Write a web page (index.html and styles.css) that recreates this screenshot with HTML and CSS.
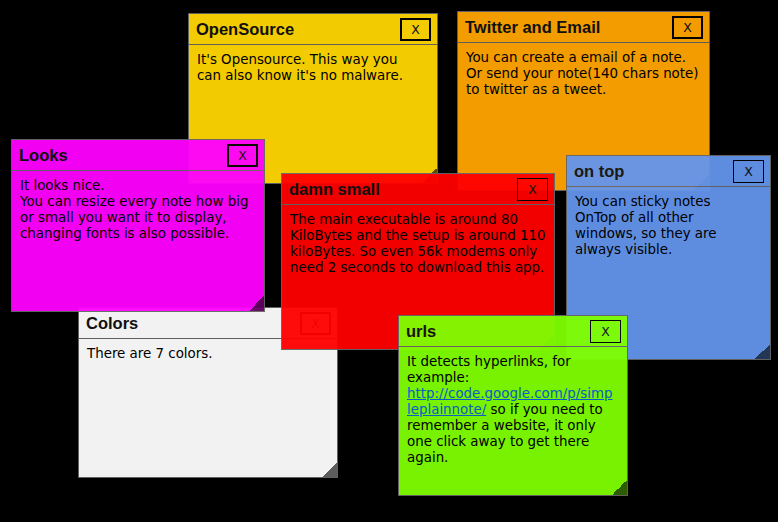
FILE: index.html
```html
<!DOCTYPE html>
<html lang="en">

<head>
    <meta charset="UTF-8">
    <title>Simple Plain Note</title>
    <link rel="stylesheet" href="styles.css">
</head>

<body>

    <div class="desktop">

        <div class="note gold n-opensource">
            <div class="note-head">
                <span class="note-title">OpenSource</span>
                <span class="close">X</span>
            </div>
            <div class="note-body">It's Opensource. This way you<br>can also know it's no malware.</div>
            <span class="grip"></span>
        </div>

        <div class="note orange n-twitter">
            <div class="note-head">
                <span class="note-title">Twitter and Email</span>
                <span class="close">X</span>
            </div>
            <div class="note-body">You can create a email of a note.<br>Or send your note(140 chars note)<br>to twitter as a tweet.</div>
            <span class="grip"></span>
        </div>

        <div class="note white n-colors">
            <div class="note-head">
                <span class="note-title">Colors</span>
                <span class="close">X</span>
            </div>
            <div class="note-body">There are 7 colors.</div>
            <span class="grip"></span>
        </div>

        <div class="note magenta n-looks">
            <div class="note-head">
                <span class="note-title">Looks</span>
                <span class="close">X</span>
            </div>
            <div class="note-body">It looks nice.<br>You can resize every note how big<br>or small you want it to display,<br>changing fonts is also possible.</div>
            <span class="grip"></span>
        </div>

        <div class="note red n-small">
            <div class="note-head">
                <span class="note-title">damn small</span>
                <span class="close thin">X</span>
            </div>
            <div class="note-body">The main executable is around 80<br>KiloBytes and the setup is around 110<br>kiloBytes. So even 56k modems only<br>need 2 seconds to download this app.</div>
            <span class="grip"></span>
        </div>

        <div class="note blue n-ontop">
            <div class="note-head">
                <span class="note-title">on top</span>
                <span class="close thin">X</span>
            </div>
            <div class="note-body">You can sticky notes<br>OnTop of all other<br>windows, so they are<br>always visible.</div>
            <span class="grip"></span>
        </div>

        <div class="note green n-urls">
            <div class="note-head">
                <span class="note-title">urls</span>
                <span class="close thin">X</span>
            </div>
            <div class="note-body">It detects hyperlinks, for<br>example:<br><a href="#">http://code.google.com/p/simp<br>leplainnote/</a> so if you need to<br>remember a website, it only<br>one click away to get there<br>again.</div>
            <span class="grip"></span>
        </div>

    </div>

</body>

</html>
```

FILE: styles.css
```css
body {
    margin: 0;
    padding: 0;
    background-color: #000;
    font-family: "DejaVu Sans", Verdana, sans-serif;
}

.desktop {
    position: relative;
    width: 778px;
    height: 522px;
    overflow: hidden;
}

/* every note is a small window on the desktop */
.note {
    position: absolute;
    box-sizing: border-box;
    border: 1px solid #666;
    opacity: 0.95;
    overflow: hidden;
    color: #000;
}

.note-head {
    box-sizing: border-box;
    height: 31px;
    border-bottom: 1px solid #666;
    display: flex;
    align-items: center;
    justify-content: space-between;
    padding: 0 6px 0 7px;
}

.note-title {
    font-family: "Liberation Sans", Arial, sans-serif;
    font-size: 16.5px;
    font-weight: bold;
    color: #111;
}

.close {
    box-sizing: border-box;
    width: 31px;
    height: 23px;
    margin-top: 1px;
    border: 2px solid #000;
    display: flex;
    align-items: center;
    justify-content: center;
    font-size: 12.5px;
    color: #111;
}

.close.thin {
    border-width: 1px;
}

.note-body {
    padding: 7px 8px 0 8px;
    font-size: 13.4px;
    line-height: 16px;
    white-space: nowrap;
}

.note-body a {
    color: #0a64d2;
}

.grip {
    position: absolute;
    right: 0;
    bottom: 0;
    width: 15px;
    height: 15px;
    background: linear-gradient(135deg, transparent 50%, rgba(0, 0, 0, 0.62) 50%);
}

/* colors */
.gold { background-color: #ffd700; }
.orange { background-color: #ffa500; }
.white { background-color: #fff; }
.magenta { background-color: #ff00ff; }
.red { background-color: #ff0000; }
.blue { background-color: #6495ed; }
.green { background-color: #7fff00; }

/* where each note sits */
.n-opensource { left: 188px; top: 13px; width: 250px; height: 171px; }
.n-twitter { left: 457px; top: 11px; width: 253px; height: 180px; }
.n-colors { left: 78px; top: 307px; width: 260px; height: 171px; }
.n-looks { left: 11px; top: 139px; width: 254px; height: 173px; }
.n-small { left: 281px; top: 173px; width: 274px; height: 177px; }
.n-ontop { left: 566px; top: 155px; width: 205px; height: 205px; }
.n-urls { left: 398px; top: 315px; width: 230px; height: 181px; }
```
